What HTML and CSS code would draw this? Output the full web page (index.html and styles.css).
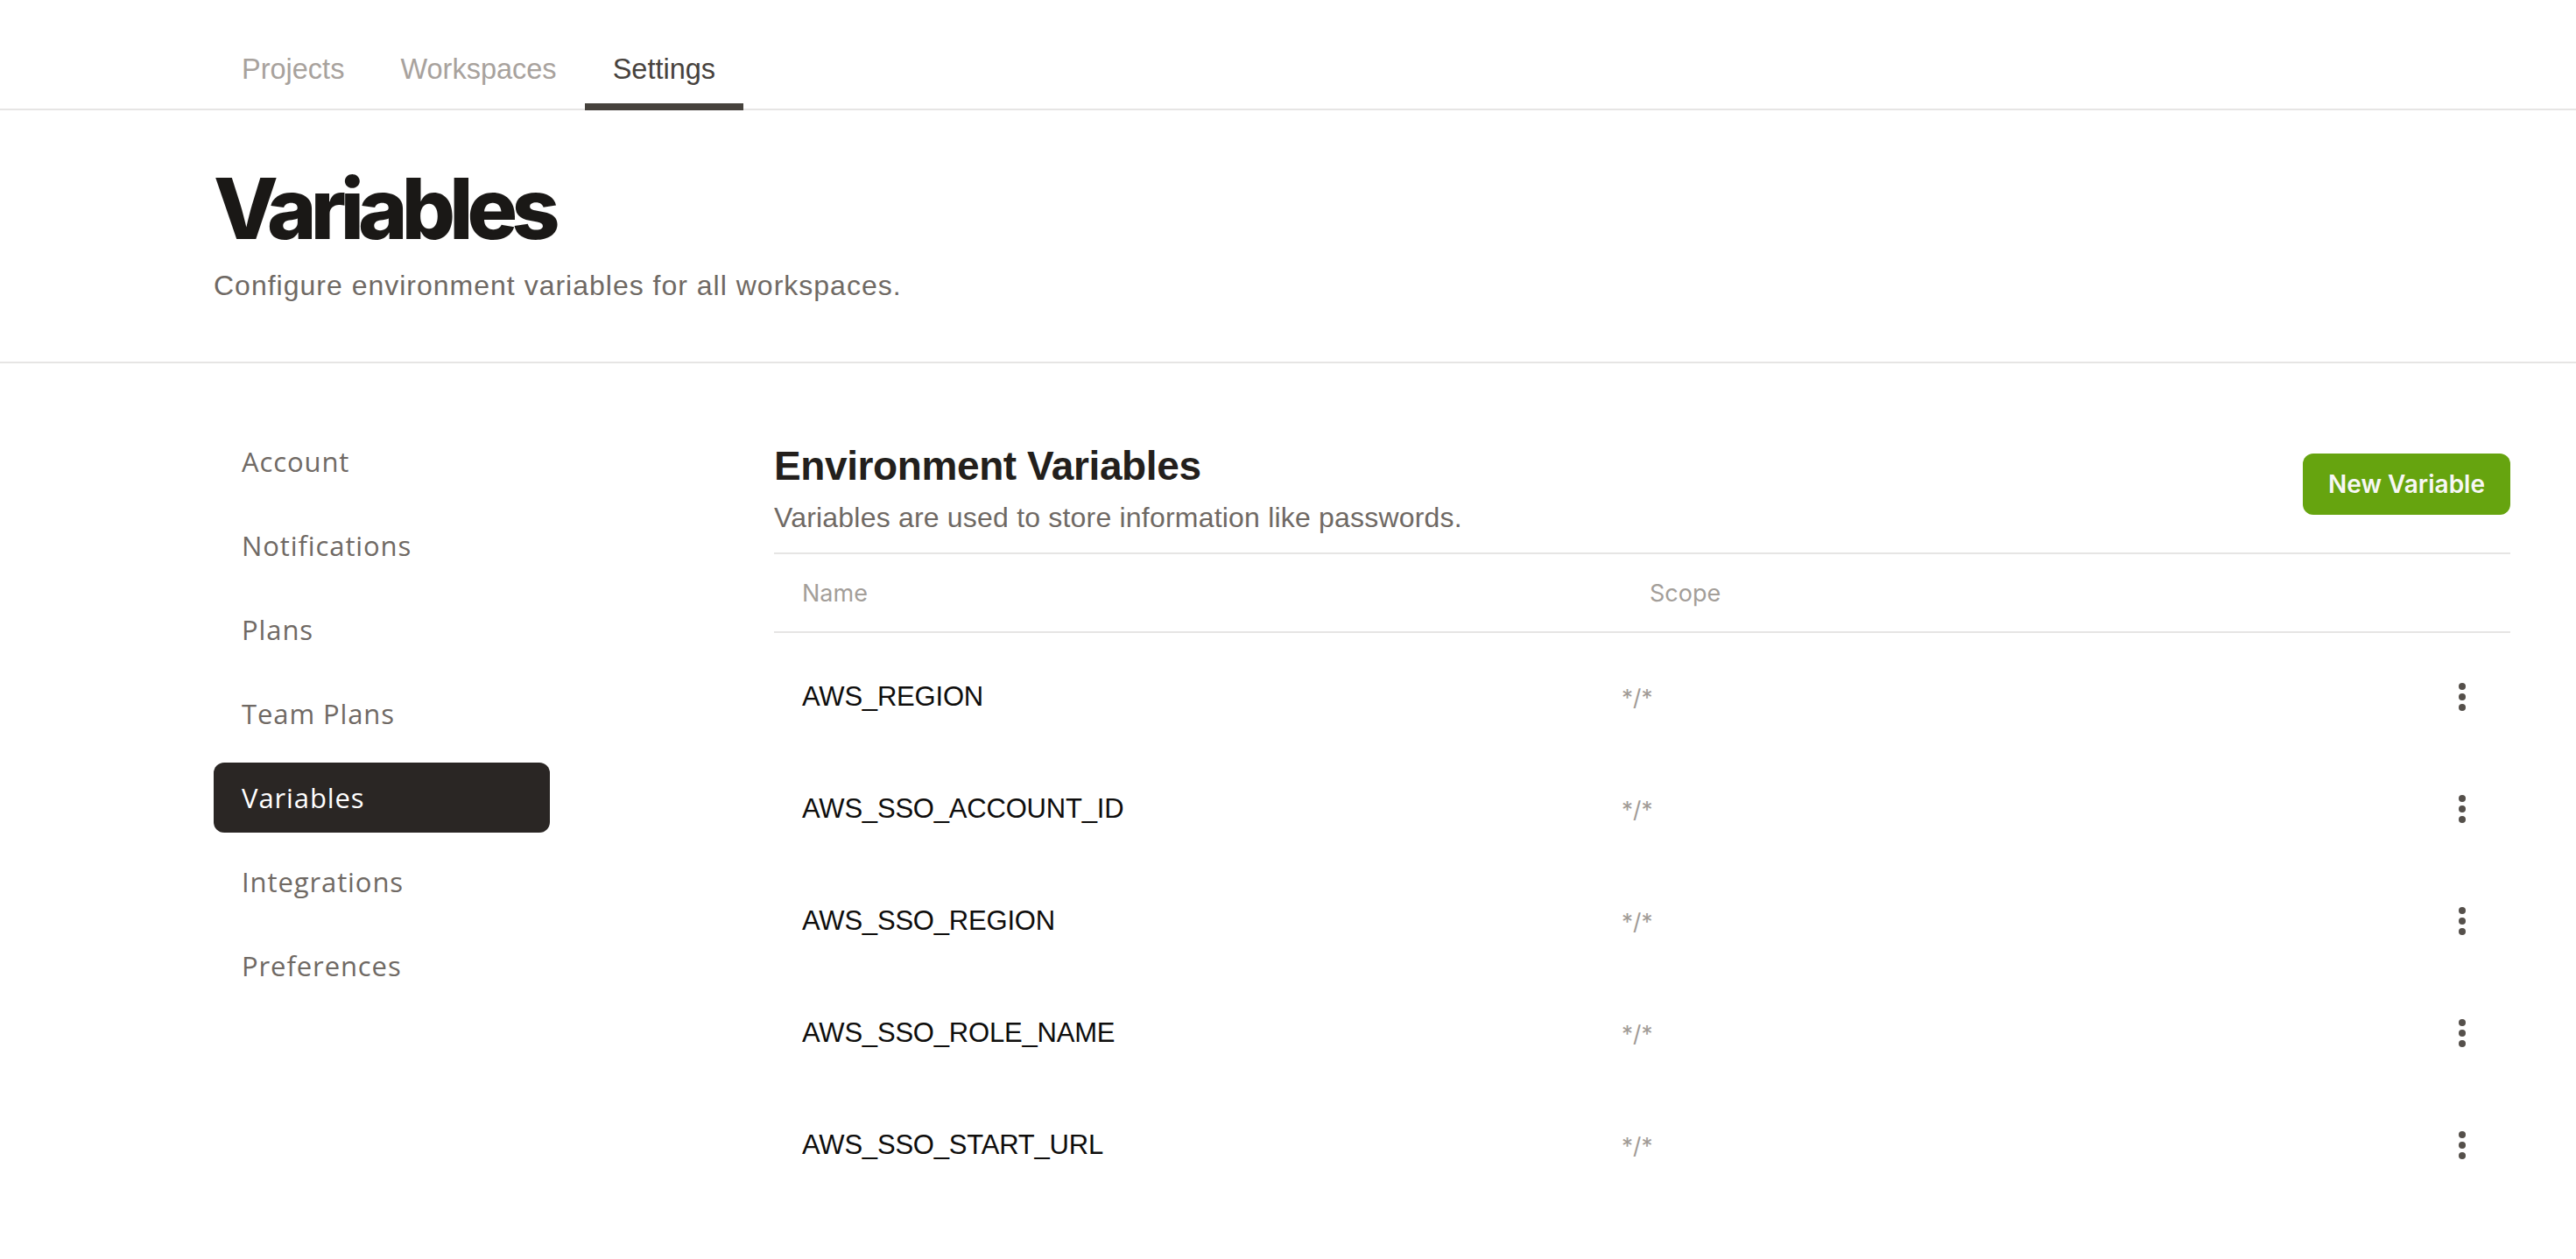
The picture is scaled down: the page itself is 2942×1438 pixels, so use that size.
FILE: index.html
```html
<!DOCTYPE html>
<html lang="en">
<head>
<meta charset="utf-8">
<title>Variables</title>
<link rel="stylesheet" href="styles.css">
</head>
<body>
<nav class="topnav">
  <div class="tabs">
    <a class="tab">Projects</a>
    <a class="tab">Workspaces</a>
    <a class="tab tab-active">Settings</a>
  </div>
</nav>
<header class="page-header">
  <h1 class="page-title">Variables</h1>
  <p class="page-sub">Configure environment variables for all workspaces.</p>
</header>
<main class="main">
  <aside class="sidebar">
    <a class="side-item">Account</a>
    <a class="side-item">Notifications</a>
    <a class="side-item">Plans</a>
    <a class="side-item">Team Plans</a>
    <a class="side-item side-active">Variables</a>
    <a class="side-item">Integrations</a>
    <a class="side-item">Preferences</a>
  </aside>
  <section class="content">
    <div class="content-head">
      <div>
        <h2 class="section-title">Environment Variables</h2>
        <p class="section-sub">Variables are used to store information like passwords.</p>
      </div>
      <button class="btn-new">New Variable</button>
    </div>
    <div class="table">
      <div class="thead">
        <div class="th">Name</div>
        <div class="th">Scope</div>
        <div class="th"></div>
      </div>
      <div class="tbody">
        <div class="tr"><div class="td-name">AWS_REGION</div><div class="td-scope">*/*</div><div class="td-menu"><svg class="kebab" width="8" height="32" viewBox="0 0 8 32"><circle cx="4" cy="4" r="4"/><circle cx="4" cy="16" r="4"/><circle cx="4" cy="28" r="4"/></svg></div></div>
        <div class="tr"><div class="td-name">AWS_SSO_ACCOUNT_ID</div><div class="td-scope">*/*</div><div class="td-menu"><svg class="kebab" width="8" height="32" viewBox="0 0 8 32"><circle cx="4" cy="4" r="4"/><circle cx="4" cy="16" r="4"/><circle cx="4" cy="28" r="4"/></svg></div></div>
        <div class="tr"><div class="td-name">AWS_SSO_REGION</div><div class="td-scope">*/*</div><div class="td-menu"><svg class="kebab" width="8" height="32" viewBox="0 0 8 32"><circle cx="4" cy="4" r="4"/><circle cx="4" cy="16" r="4"/><circle cx="4" cy="28" r="4"/></svg></div></div>
        <div class="tr"><div class="td-name">AWS_SSO_ROLE_NAME</div><div class="td-scope">*/*</div><div class="td-menu"><svg class="kebab" width="8" height="32" viewBox="0 0 8 32"><circle cx="4" cy="4" r="4"/><circle cx="4" cy="16" r="4"/><circle cx="4" cy="28" r="4"/></svg></div></div>
        <div class="tr"><div class="td-name">AWS_SSO_START_URL</div><div class="td-scope">*/*</div><div class="td-menu"><svg class="kebab" width="8" height="32" viewBox="0 0 8 32"><circle cx="4" cy="4" r="4"/><circle cx="4" cy="16" r="4"/><circle cx="4" cy="28" r="4"/></svg></div></div>
      </div>
    </div>
  </section>
</main>
</body>
</html>
```
FILE: styles.css
```css
* { box-sizing: border-box; }
html, body { margin: 0; padding: 0; background: #ffffff; }
body {
  font-family: "Liberation Sans", Arial, sans-serif;
  color: #1c1a18;
  width: 2942px;
  min-height: 1438px;
}

/* top nav */
.topnav {
  border-bottom: 2px solid #e6e5e4;
  padding-left: 244px;
}
.tabs {
  display: flex;
  height: 124px;
}
.tab {
  display: block;
  height: 126px;
  padding: 60px 32px 0;
  font-size: 32.5px;
  line-height: 38px;
  color: #a8a29d;
  cursor: pointer;
}
.tab-active {
  color: #47423d;
  border-bottom: 8px solid #46423d;
}

/* page header */
.page-header {
  padding: 64px 0 67px 244px;
  border-bottom: 2px solid #e6e5e4;
}
.page-title {
  margin: 0;
  font-family: "Inter", sans-serif;
  font-weight: 800;
  font-size: 96px;
  line-height: 96px;
  letter-spacing: -6.8px;
  color: #1a1816;
}
.page-sub {
  margin: 20px 0 0;
  font-size: 32px;
  line-height: 40px;
  letter-spacing: 1px;
  color: #6f6964;
}

/* main */
.main {
  display: flex;
  padding: 72px 75px 0 244px;
  gap: 256px;
}
.sidebar {
  display: flex;
  flex-direction: column;
  gap: 16px;
  width: 384px;
  flex: none;
}
.side-item {
  display: flex;
  align-items: center;
  height: 80px;
  padding-left: 32px;
  border-radius: 12px;
  font-family: "Open Sans", sans-serif;
  font-weight: 500;
  font-size: 31px;
  letter-spacing: 0.9px;
  color: #6f6964;
  cursor: pointer;
}
.side-active {
  background: #2a2624;
  color: #ffffff;
}

.content {
  flex: 1;
  min-width: 0;
  padding-top: 17px;
}
.content-head {
  display: flex;
  justify-content: space-between;
  align-items: center;
}
.section-title {
  margin: 0;
  font-size: 46px;
  line-height: 56px;
  font-weight: 700;
  letter-spacing: -0.4px;
  color: #231f1c;
}
.section-sub {
  margin: 11px 0 0;
  font-size: 32px;
  line-height: 40px;
  letter-spacing: 0.2px;
  color: #6f6964;
}
.btn-new {
  height: 70px;
  padding: 0 29px;
  margin-bottom: 10px;
  border: none;
  border-radius: 12px;
  background: #66a40f;
  color: #f7f7f5;
  font-family: "Inter", sans-serif;
  font-weight: 600;
  font-size: 28px;
  cursor: pointer;
}

/* table */
.table {
  margin-top: 20px;
  border-top: 2px solid #e6e5e4;
}
.thead, .tr {
  display: grid;
  grid-template-columns: 968px 1fr 80px;
}
.thead {
  height: 90px;
  align-items: center;
  border-bottom: 2px solid #e6e5e4;
}
.th {
  padding-left: 32px;
  font-family: "Inter", sans-serif;
  font-size: 27px;
  color: #a39e99;
}
.tbody {
  padding-top: 9px;
}
.tr {
  height: 128px;
  align-items: center;
}
.td-name {
  padding-left: 32px;
  font-size: 31px;
  letter-spacing: -0.2px;
  color: #0e0d0c;
}
.td-scope {
  font-family: "Inter", sans-serif;
  font-size: 26px;
  color: #a19b96;
}
.td-menu {
  display: flex;
  justify-content: flex-start;
  padding-left: 21px;
}
.kebab { fill: #55504b; display: block; }
```
